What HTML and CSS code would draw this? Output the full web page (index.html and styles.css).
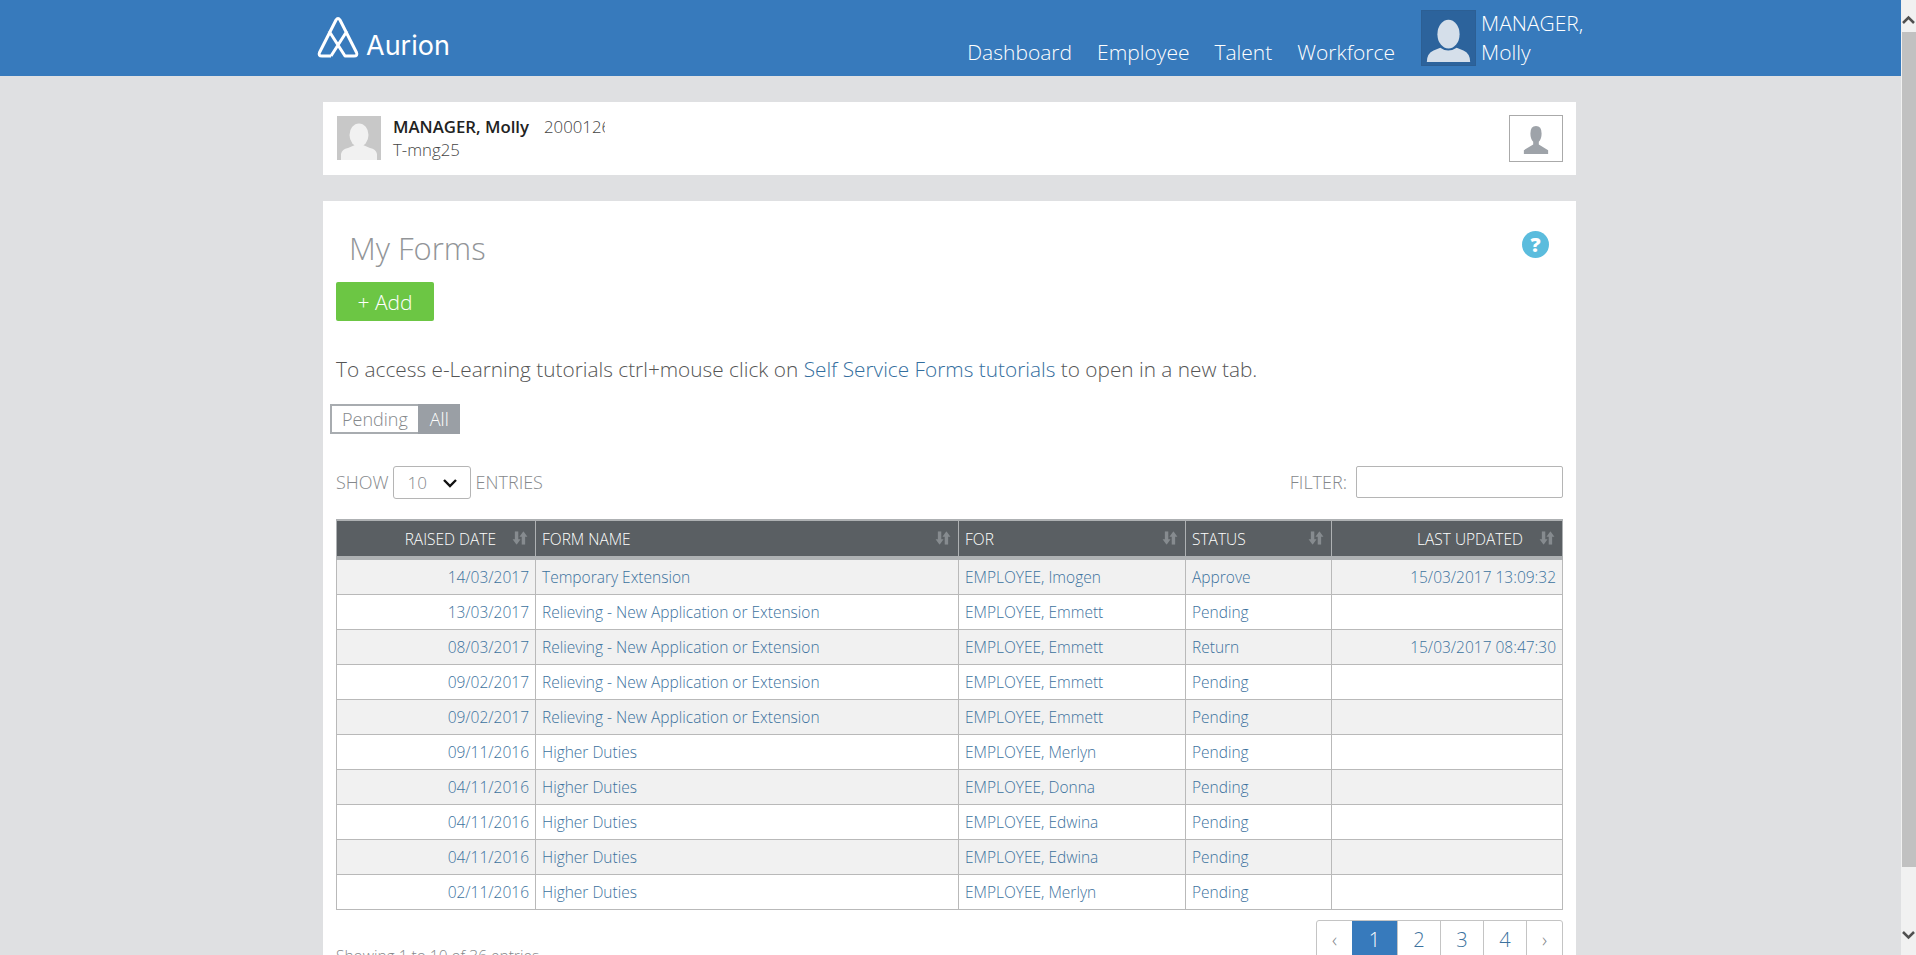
FILE: index.html
```html
<!DOCTYPE html>
<html lang="en">
<head>
  <meta charset="utf-8" />
  <title>My Forms</title>
  <link rel="stylesheet" href="styles.css">
</head>
<body>
  <div class="page">
    <header class="topbar">
      <div class="topbar-inner">
        <a class="logo">
          <svg class="logo-mark" viewBox="0 0 42 42" width="42" height="42">
            <path d="M14 40 L5 40 Q1 40 2.5 36.5 L19 4 Q21 1 23 4 L39.5 36.5 Q41 40 37 40 L28 40 L12 15 M14 40 L30 15" fill="none" stroke="#fff" stroke-width="3" stroke-linejoin="round" />
          </svg>
          <span class="logo-text">Aurion</span>
        </a>
        <nav class="nav">
          <a>Dashboard</a>
          <a>Employee</a>
          <a>Talent</a>
          <a>Workforce</a>
        </nav>
        <div class="user">
          <div class="user-photo">
            <svg viewBox="0 0 55 56" width="53" height="54">
              <ellipse cx="27.5" cy="24" rx="11.5" ry="15" fill="#d5dfea" />
              <path d="M5 53 Q5 44 12 41 L19 38 Q27 44 36 38 L43 41 Q50 44 50 53 Z" fill="#d5dfea" />
            </svg>
          </div>
          <div class="user-name">MANAGER,<br>Molly</div>
        </div>
      </div>
    </header>

    <main class="content">
      <section class="card person">
        <div class="person-photo">
          <svg viewBox="0 0 44 44" width="44" height="44">
            <ellipse cx="22" cy="19" rx="9.5" ry="11.5" fill="#f1f1f1" />
            <path d="M4 44 L4 38 Q5 33 11 32 L18 29 L26 29 L33 32 Q39 33 40 38 L40 44 Z" fill="#f1f1f1" />
          </svg>
        </div>
        <div class="person-text">
          <div class="person-line">
            <strong>MANAGER, Molly</strong>
            <span class="person-id">2000126</span>
          </div>
          <div>T-mng25</div>
        </div>
        <button class="person-btn">
          <svg viewBox="0 0 30 34" width="28" height="32">
            <path d="M15 3 Q21 3 21 11 Q21 17 18 20 L18 23 L28 29 L28 33 L2 33 L2 29 L12 23 L12 20 Q9 17 9 11 Q9 3 15 3 Z" fill="#9ea3a9" />
          </svg>
        </button>
      </section>

      <section class="card forms">
        <div class="help">?</div>
        <h1 class="title">My Forms</h1>
        <button class="add-btn">+ Add</button>
        <p class="intro">To access e-Learning tutorials ctrl+mouse click on <a>Self Service Forms tutorials</a> to open in a new tab.</p>
        <div class="toggle">
          <span class="toggle-item">Pending</span>
          <span class="toggle-item active">All</span>
        </div>

        <div class="table-tools">
          <div class="tool-group">
            SHOW
            <div class="select">
              <span>10</span>
              <svg viewBox="0 0 16 10" width="16" height="10">
                <path d="M2 2 L8 8 L14 2" fill="none" stroke="#111" stroke-width="2.4" />
              </svg>
            </div>
            ENTRIES
          </div>
          <div class="tool-group">
            FILTER:
            <input class="filter" type="text">
          </div>
        </div>

        <table class="grid">
          <colgroup>
            <col class="col-date">
            <col class="col-name">
            <col class="col-for">
            <col class="col-status">
            <col class="col-updated">
          </colgroup>
          <thead>
            <tr>
              <th class="right">RAISED DATE<svg class="sort" viewBox="0 0 14 12"><use href="#sort-icon" /></svg></th>
              <th>FORM NAME<svg class="sort" viewBox="0 0 14 12"><use href="#sort-icon" /></svg></th>
              <th>FOR<svg class="sort" viewBox="0 0 14 12"><use href="#sort-icon" /></svg></th>
              <th>STATUS<svg class="sort" viewBox="0 0 14 12"><use href="#sort-icon" /></svg></th>
              <th class="right">LAST UPDATED<svg class="sort" viewBox="0 0 14 12"><use href="#sort-icon" /></svg></th>
            </tr>
          </thead>
          <tbody>
            <tr><td class="right">14/03/2017</td><td>Temporary Extension</td><td>EMPLOYEE, Imogen</td><td>Approve</td><td class="right">15/03/2017 13:09:32</td></tr>
            <tr><td class="right">13/03/2017</td><td>Relieving - New Application or Extension</td><td>EMPLOYEE, Emmett</td><td>Pending</td><td></td></tr>
            <tr><td class="right">08/03/2017</td><td>Relieving - New Application or Extension</td><td>EMPLOYEE, Emmett</td><td>Return</td><td class="right">15/03/2017 08:47:30</td></tr>
            <tr><td class="right">09/02/2017</td><td>Relieving - New Application or Extension</td><td>EMPLOYEE, Emmett</td><td>Pending</td><td></td></tr>
            <tr><td class="right">09/02/2017</td><td>Relieving - New Application or Extension</td><td>EMPLOYEE, Emmett</td><td>Pending</td><td></td></tr>
            <tr><td class="right">09/11/2016</td><td>Higher Duties</td><td>EMPLOYEE, Merlyn</td><td>Pending</td><td></td></tr>
            <tr><td class="right">04/11/2016</td><td>Higher Duties</td><td>EMPLOYEE, Donna</td><td>Pending</td><td></td></tr>
            <tr><td class="right">04/11/2016</td><td>Higher Duties</td><td>EMPLOYEE, Edwina</td><td>Pending</td><td></td></tr>
            <tr><td class="right">04/11/2016</td><td>Higher Duties</td><td>EMPLOYEE, Edwina</td><td>Pending</td><td></td></tr>
            <tr><td class="right">02/11/2016</td><td>Higher Duties</td><td>EMPLOYEE, Merlyn</td><td>Pending</td><td></td></tr>
          </tbody>
        </table>

        <div class="table-foot">
          <div class="showing">Showing 1 to 10 of 36 entries</div>
          <ul class="pager">
            <li class="edge">‹</li>
            <li class="current">1</li>
            <li>2</li>
            <li>3</li>
            <li>4</li>
            <li class="edge">›</li>
          </ul>
        </div>
      </section>
    </main>
  </div>

  <div class="scrollbar">
    <svg class="scroll-up" viewBox="0 0 15 16" width="15" height="16"><path d="M2 11 L7.5 5.5 L13 11" fill="none" stroke="#505050" stroke-width="2.5" /></svg>
    <div class="scroll-track"><div class="scroll-thumb"></div></div>
    <svg class="scroll-down" viewBox="0 0 15 16" width="15" height="16"><path d="M2 5 L7.5 10.5 L13 5" fill="none" stroke="#505050" stroke-width="2.5" /></svg>
  </div>

  <svg class="defs" width="0" height="0">
    <symbol id="sort-icon" viewBox="0 0 14 12">
      <path d="M2.5 0 H5.5 V7 H7.5 L4 12 L0.5 7 H2.5 Z M8.5 12 H11.5 V5 H13.5 L10 0 L6.5 5 H8.5 Z" fill="#868b8f" />
    </symbol>
  </svg>
</body>
</html>
```

FILE: styles.css
```css
/* Base */
html, body {
  height: 100%;
  margin: 0;
  overflow: hidden;
}

body {
  display: flex;
  font-family: "Open Sans", sans-serif;
  font-weight: 300;
  background-color: #dfe0e2;
  color: #555;
}

a {
  color: inherit;
  text-decoration: none;
}

.page {
  flex-grow: 1;
  min-width: 0;
  overflow: hidden;
}

.defs {
  position: absolute;
}

/* Top bar */
.topbar {
  height: 76px;
  background-color: #377abc;
  color: #fff;
}

.topbar-inner {
  width: 1266px;
  height: 100%;
  margin-left: 317px;
  display: flex;
  align-items: flex-end;
}

.logo {
  display: flex;
  align-items: flex-end;
  align-self: flex-start;
  margin-top: 16px;
  gap: 7px;
}

.logo-text {
  font-family: "Inter", sans-serif;
  font-size: 27px;
  font-weight: 400;
  line-height: 34px;
  margin-bottom: -5px;
}

.nav {
  display: flex;
  gap: 25px;
  margin-left: auto;
  padding-bottom: 10px;
  font-size: 21px;
  line-height: 28px;
}

.user {
  display: flex;
  align-self: flex-start;
  gap: 5px;
  margin: 10px 0 0 26px;
}

.user-photo {
  width: 55px;
  height: 56px;
  box-sizing: border-box;
  border: 1px solid #2c5f94;
  background-color: #2c639c;
  overflow: hidden;
}

.user-name {
  width: 102px;
  margin-top: -1px;
  font-size: 21px;
  line-height: 29px;
}

/* Cards */
.content {
  width: 1253px;
  margin-left: 323px;
  padding-top: 26px;
}

.card {
  background-color: #fff;
  margin-bottom: 26px;
}

.person {
  height: 73px;
  box-sizing: border-box;
  padding: 14px 13px 0 14px;
  display: flex;
  align-items: flex-start;
  font-size: 16.8px;
  line-height: 23px;
  color: #444;
}

.person-photo {
  width: 44px;
  height: 44px;
  background-color: #c8c8c8;
  overflow: hidden;
}

.person-text {
  margin: -1px 0 0 12px;
}

.person-line {
  display: flex;
  gap: 15px;
}

.person-line strong {
  font-weight: 600;
  color: #222;
}

.person-id {
  width: 61px;
  overflow: hidden;
}

.person-btn {
  width: 54px;
  height: 47px;
  margin: -1px 0 0 auto;
  padding: 0;
  border: 1px solid #aaa;
  background-color: #fff;
  display: flex;
  align-items: center;
  justify-content: center;
}

/* My Forms */
.forms {
  position: relative;
  padding: 23px 13px 26px;
}

.help {
  position: absolute;
  top: 30px;
  right: 27px;
  width: 27px;
  height: 27px;
  border-radius: 50%;
  background-color: #5bbcdd;
  color: #fff;
  font-size: 20px;
  font-weight: 800;
  line-height: 27px;
  text-align: center;
}

.title {
  margin: 0 0 0 13px;
  font-size: 31px;
  font-weight: 300;
  line-height: 48px;
  color: #929598;
}

.add-btn {
  display: block;
  width: 98px;
  height: 39px;
  margin-top: 10px;
  padding: 0;
  border: 0;
  border-radius: 2px;
  background-color: #6cc644;
  color: #fff;
  font: inherit;
  font-size: 21px;
}

.intro {
  margin: 33px 0 0;
  font-size: 20.8px;
  line-height: 30px;
}

.intro a {
  color: #336e9e;
}

.toggle {
  display: inline-flex;
  margin: 20px 0 0 -6px;
  font-size: 18px;
  line-height: 26px;
  vertical-align: top;
}

.toggle-item {
  padding: 0 10px 0 10px;
  border: 2px solid #a8acb0;
  border-right: 0;
  color: #85888b;
}

.toggle-item.active {
  padding: 0 9px 0 10px;
  border: 2px solid #9a9fa5;
  background-color: #9a9fa5;
  color: #fff;
}

.table-tools {
  display: flex;
  justify-content: space-between;
  margin-top: 32px;
  font-size: 18px;
  color: #85888b;
}

.tool-group {
  display: flex;
  align-items: flex-start;
  gap: 4px;
  line-height: 33px;
}

.select {
  width: 78px;
  height: 33px;
  box-sizing: border-box;
  margin-right: 1px;
  padding: 0 12px 0 14px;
  display: flex;
  align-items: center;
  justify-content: space-between;
  border: 1px solid #b5b5b5;
  border-radius: 3px;
  font-size: 17px;
}

.filter {
  width: 207px;
  height: 32px;
  box-sizing: border-box;
  margin: 0 0 0 5px;
  border: 1px solid #b5b5b5;
  border-radius: 2px;
  background-color: #fff;
}

/* Table */
.grid {
  width: 1226px;
  margin-top: 20px;
  table-layout: fixed;
  border-collapse: collapse;
  font-size: 15.5px;
  color: #3c729e;
}

.col-date { width: 199px; }
.col-name { width: 423px; }
.col-for { width: 227px; }
.col-status { width: 146px; }
.col-updated { width: 231px; }

.grid th {
  position: relative;
  height: 35px;
  padding: 0 6px;
  background-color: #5a5f63;
  border: 1px solid #aeb1b3;
  border-width: 2px 1px 4px;
  color: #fff;
  font-size: 15.5px;
  font-weight: 300;
  text-align: left;
}

.grid th.right {
  padding-right: 39px;
  text-align: right;
}

.sort {
  position: absolute;
  top: 10px;
  right: 7px;
  width: 16px;
  height: 14px;
}

.grid td {
  height: 34px;
  padding: 0 6px;
  border: 1px solid #b9b9b9;
}

.grid td.right {
  text-align: right;
}

.grid tbody tr:nth-child(odd) {
  background-color: #f1f1f1;
}

.table-foot {
  display: flex;
  justify-content: space-between;
  align-items: flex-start;
  margin-top: 10px;
}

.showing {
  margin-top: 25px;
  font-size: 15.5px;
  color: #85888b;
}

.pager {
  display: flex;
  margin: 0;
  padding: 0;
  list-style: none;
  border: 1px solid #c4c4c4;
  border-radius: 3px 3px 0 0;
  font-size: 20px;
  line-height: 38px;
  color: #3c729e;
}

.pager li {
  width: 43px;
  text-align: center;
  border-left: 1px solid #c4c4c4;
  box-sizing: border-box;
}

.pager li:first-child {
  border-left: 0;
}

.pager .edge {
  width: 36px;
  color: #85888b;
}

.pager li:first-child.edge {
  width: 35px;
}

.pager .current {
  width: 45px;
  border-left: 0;
  background-color: #377abc;
  color: #fff;
}

/* Fake browser scrollbar */
.scrollbar {
  flex: 0 0 15px;
  display: flex;
  flex-direction: column;
  background-color: #f1f1f1;
}

.scrollbar svg {
  flex: none;
}

.scroll-up {
  margin-top: 12px;
}

.scroll-down {
  margin-bottom: 12px;
}

.scroll-track {
  flex-grow: 1;
  padding: 4px 0 60px;
  display: flex;
}

.scroll-thumb {
  flex-grow: 1;
  margin-left: 1px;
  background-color: #c1c1c1;
}
```
